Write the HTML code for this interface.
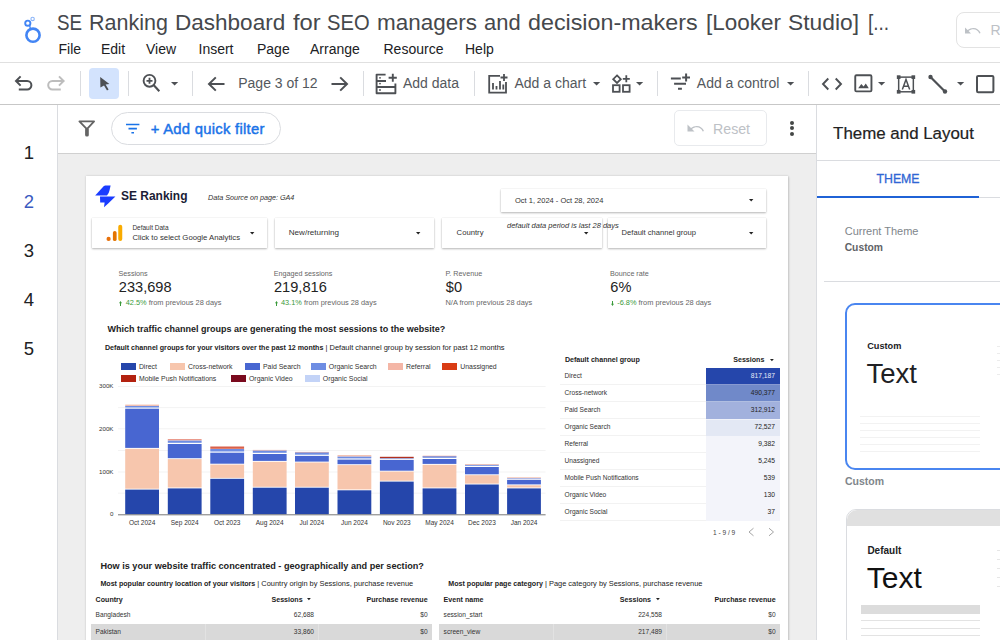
<!DOCTYPE html><html><head><meta charset="utf-8"><style>
html,body{margin:0;padding:0;width:1000px;height:640px;overflow:hidden;background:#fff;font-family:"Liberation Sans",sans-serif;}
.a{position:absolute;}
.t{position:absolute;white-space:nowrap;line-height:1;}
svg{position:absolute;overflow:visible;}
</style></head><body>
<svg style="left:0;top:0" width="60" height="60" viewBox="0 0 60 60">
<circle cx="33" cy="35.2" r="6.6" fill="none" stroke="#4285f4" stroke-width="2.6"/>
<circle cx="27.8" cy="23.2" r="2.6" fill="none" stroke="#4285f4" stroke-width="1.9"/>
<circle cx="32.6" cy="18.9" r="1.7" fill="none" stroke="#8ab4f8" stroke-width="1.1"/>
<line x1="29.6" y1="25.4" x2="30.4" y2="28.6" stroke="#4285f4" stroke-width="1.3"/>
</svg>
<div class="t" style="left:56.80px;top:12.00px;font-size:22.4px;color:#45484c;transform:scaleX(0.84);transform-origin:left center;">SE</div>
<div class="t" style="left:88.50px;top:12.00px;font-size:22.4px;color:#45484c;transform:scaleX(0.96);transform-origin:left center;">Ranking</div>
<div class="t" style="left:174.90px;top:12.00px;font-size:22.4px;color:#45484c;transform:scaleX(1.006);transform-origin:left center;">Dashboard</div>
<div class="t" style="left:292.60px;top:12.00px;font-size:22.4px;color:#45484c;transform:scaleX(1.06);transform-origin:left center;">for</div>
<div class="t" style="left:327.30px;top:12.00px;font-size:22.4px;color:#45484c;transform:scaleX(0.9);transform-origin:left center;">SEO</div>
<div class="t" style="left:376.60px;top:12.00px;font-size:22.4px;color:#45484c;transform:scaleX(1.003);transform-origin:left center;">managers</div>
<div class="t" style="left:483.50px;top:12.00px;font-size:22.4px;color:#45484c;transform:scaleX(0.98);transform-origin:left center;">and</div>
<div class="t" style="left:528.00px;top:12.00px;font-size:22.4px;color:#45484c;transform:scaleX(1.04);transform-origin:left center;">decision-makers</div>
<div class="t" style="left:706.40px;top:12.00px;font-size:22.4px;color:#45484c;transform:scaleX(1.004);transform-origin:left center;">[Looker</div>
<div class="t" style="left:788.00px;top:12.00px;font-size:22.4px;color:#45484c;transform:scaleX(1.018);transform-origin:left center;">Studio]</div>
<div class="t" style="left:868.20px;top:12.00px;font-size:22.4px;color:#45484c;transform:scaleX(0.85);transform-origin:left center;">[...</div>
<div class="t" style="left:58.50px;top:42.00px;font-size:14px;color:#202124;">File</div>
<div class="t" style="left:101.00px;top:42.00px;font-size:14px;color:#202124;">Edit</div>
<div class="t" style="left:146.00px;top:42.00px;font-size:14px;color:#202124;">View</div>
<div class="t" style="left:198.50px;top:42.00px;font-size:14px;color:#202124;">Insert</div>
<div class="t" style="left:257.00px;top:42.00px;font-size:14px;color:#202124;">Page</div>
<div class="t" style="left:310.00px;top:42.00px;font-size:14px;color:#202124;">Arrange</div>
<div class="t" style="left:383.50px;top:42.00px;font-size:14px;color:#202124;">Resource</div>
<div class="t" style="left:465.00px;top:42.00px;font-size:14px;color:#202124;">Help</div>
<div class="a" style="left:955.60px;top:12.00px;width:60.00px;height:36.00px;background:#fff;border:1px solid #e3e3e3;border-radius:8px;box-sizing:border-box;"></div>
<svg style="left:962px;top:22px" width="20" height="16" viewBox="0 0 20 16">
<path d="M3 5.5 V11.5 H9 L6.6 9.1 C8 7.9 9.6 7.3 11.4 7.3 C14.2 7.3 16.4 9 17.3 11.4 L18.6 11 C17.5 7.9 14.7 5.9 11.4 5.9 C9.3 5.9 7.3 6.7 5.6 8.1 Z" fill="#bdc1c6"/>
</svg>
<div class="t" style="left:990.40px;top:23.00px;font-size:14px;color:#bdc1c6;">Re</div>
<div class="a" style="left:0.00px;top:62.00px;width:1000.00px;height:1.00px;background:#e0e0e0;"></div>
<div class="a" style="left:89.00px;top:68.00px;width:30.00px;height:31.00px;background:#d3e3fd;border-radius:4px;"></div>
<div class="a" style="left:79.50px;top:71.00px;width:1.00px;height:24.50px;background:#dadce0;"></div>
<div class="a" style="left:127.50px;top:71.00px;width:1.00px;height:24.50px;background:#dadce0;"></div>
<div class="a" style="left:192.00px;top:71.00px;width:1.00px;height:24.50px;background:#dadce0;"></div>
<div class="a" style="left:362.50px;top:71.00px;width:1.00px;height:24.50px;background:#dadce0;"></div>
<div class="a" style="left:474.00px;top:71.00px;width:1.00px;height:24.50px;background:#dadce0;"></div>
<div class="a" style="left:656.50px;top:71.00px;width:1.00px;height:24.50px;background:#dadce0;"></div>
<div class="a" style="left:807.90px;top:71.00px;width:1.00px;height:24.50px;background:#dadce0;"></div>
<svg style="left:12px;top:72px" width="24" height="24" viewBox="0 0 24 24">
<path d="M4 9 H15.2 A4.2 4.2 0 0 1 15.2 17.4 H6.8" fill="none" stroke="#4d5054" stroke-width="2"/>
<path d="M8.6 4.4 L4 9 L8.6 13.6" fill="none" stroke="#4d5054" stroke-width="2"/>
</svg>
<svg style="left:44px;top:72px" width="24" height="24" viewBox="0 0 24 24">
<path d="M19.4 9 H8.4 A4.2 4.2 0 0 0 8.4 17.4 H16.8" fill="none" stroke="#bdbdbd" stroke-width="2"/>
<path d="M15 4.4 L19.6 9 L15 13.6" fill="none" stroke="#bdbdbd" stroke-width="2"/>
</svg>
<svg style="left:96px;top:72px" width="24" height="24" viewBox="0 0 24 24">
<path d="M4.2 5 L13.4 12 L9.6 12.6 L12.6 17.4 L11 18.4 L8 13.6 L4.4 15.6 Z" fill="#4d5054"/>
</svg>
<svg style="left:140px;top:72px" width="24" height="24" viewBox="0 0 24 24">
<circle cx="9.5" cy="8.8" r="5.9" fill="none" stroke="#4d5054" stroke-width="1.9"/>
<path d="M13.6 13 L19.3 19.2" stroke="#4d5054" stroke-width="2.1"/>
<path d="M9.5 5.8 V11.8 M6.5 8.8 H12.5" stroke="#4d5054" stroke-width="1.8"/>
</svg>
<svg style="left:171px;top:82px" width="7.2" height="3.6" viewBox="0 0 7.2 3.6"><path d="M0 0 H7.2 L3.6 3.6 Z" fill="#4d5054"/></svg>
<svg style="left:204px;top:71.5px" width="24" height="24" viewBox="0 0 24 24">
<path d="M20.5 12 H5.5 M11.8 5.4 L5 12 L11.8 18.6" fill="none" stroke="#4d5054" stroke-width="2"/>
</svg>
<div class="t" style="left:238.25px;top:76.00px;font-size:14px;color:#54585d;">Page 3 of 12</div>
<svg style="left:327.5px;top:71.5px" width="24" height="24" viewBox="0 0 24 24">
<path d="M3.5 12 H18.5 M12.2 5.4 L19 12 L12.2 18.6" fill="none" stroke="#4d5054" stroke-width="2"/>
</svg>
<svg style="left:374px;top:72px" width="24" height="24" viewBox="0 0 24 24">
<path d="M11.6 2.6 H2.6 V21.2 H21.4 V11.5" fill="none" stroke="#4d5054" stroke-width="1.9" stroke-linejoin="round"/>
<path d="M2.6 9 H12 M2.6 15 H21.4" fill="none" stroke="#4d5054" stroke-width="1.9"/>
<path d="M18.8 1.8 V9.8 M14.6 5.8 H22.8" stroke="#4d5054" stroke-width="1.9"/>
<circle cx="6" cy="5.8" r="0.9" fill="#4d5054"/><circle cx="6" cy="11.6" r="0.9" fill="#4d5054"/><circle cx="6" cy="18" r="0.9" fill="#4d5054"/>
</svg>
<div class="t" style="left:403.00px;top:76.00px;font-size:14px;color:#54585d;">Add data</div>
<svg style="left:486px;top:72px" width="24" height="24" viewBox="0 0 24 24">
<path d="M14 3.8 H3.2 V20.6 H20 V10" fill="none" stroke="#4d5054" stroke-width="1.8"/>
<path d="M7 11 V17.5 M10.5 14 V17.5 M14 9 V17.5 M17.3 12.5 V17.5" stroke="#4d5054" stroke-width="1.8"/>
<path d="M18 2 V9 M14.5 5.5 H21.5" stroke="#4d5054" stroke-width="1.8"/>
</svg>
<div class="t" style="left:514.50px;top:76.00px;font-size:14px;color:#54585d;">Add a chart</div>
<svg style="left:592.5px;top:82px" width="7.2" height="3.6" viewBox="0 0 7.2 3.6"><path d="M0 0 H7.2 L3.6 3.6 Z" fill="#4d5054"/></svg>
<svg style="left:610px;top:72px" width="24" height="24" viewBox="0 0 24 24">
<path d="M7 3.4 L10.8 7.2 L7 11 L3.2 7.2 Z" fill="none" stroke="#4d5054" stroke-width="1.8"/>
<rect x="3" y="13.2" width="6.6" height="6.6" fill="none" stroke="#4d5054" stroke-width="1.8"/>
<rect x="13" y="13.2" width="6.6" height="6.6" fill="none" stroke="#4d5054" stroke-width="1.8"/>
<path d="M16.3 3.3 V10.3 M12.8 6.8 H19.8" stroke="#4d5054" stroke-width="1.8"/>
</svg>
<svg style="left:636px;top:82px" width="7.2" height="3.6" viewBox="0 0 7.2 3.6"><path d="M0 0 H7.2 L3.6 3.6 Z" fill="#4d5054"/></svg>
<svg style="left:669px;top:72px" width="24" height="24" viewBox="0 0 24 24">
<path d="M1.9 6.4 H11.8 M5.1 11.7 H17 M9 16.8 H12.9" stroke="#4d5054" stroke-width="2"/>
<path d="M17.1 1.5 V9.4 M13.2 5.6 H21" stroke="#4d5054" stroke-width="2"/>
</svg>
<div class="t" style="left:696.80px;top:76.00px;font-size:14px;color:#54585d;">Add a control</div>
<svg style="left:786.5px;top:82px" width="7.2" height="3.6" viewBox="0 0 7.2 3.6"><path d="M0 0 H7.2 L3.6 3.6 Z" fill="#4d5054"/></svg>
<svg style="left:820px;top:72px" width="24" height="24" viewBox="0 0 24 24">
<path d="M8.3 6.5 L3 12 L8.3 17.5 M15.7 6.5 L21 12 L15.7 17.5" fill="none" stroke="#4d5054" stroke-width="1.9"/>
</svg>
<svg style="left:852px;top:72px" width="24" height="24" viewBox="0 0 24 24">
<rect x="3.25" y="3.25" width="16.2" height="16.1" rx="1.2" fill="none" stroke="#4d5054" stroke-width="1.9"/>
<path d="M6.2 16.2 L9.3 12 L11.6 14.6 L13.8 11.6 L16.8 16.2 Z" fill="#4d5054"/>
</svg>
<svg style="left:877.5px;top:82px" width="7.2" height="3.6" viewBox="0 0 7.2 3.6"><path d="M0 0 H7.2 L3.6 3.6 Z" fill="#4d5054"/></svg>
<svg style="left:895px;top:72.5px" width="22" height="22" viewBox="0 0 24 24">
<rect x="4" y="4.5" width="16" height="16" fill="none" stroke="#4d5054" stroke-width="1.6"/>
<rect x="2" y="2.5" width="4" height="4" fill="#4d5054"/><rect x="18" y="2.5" width="4" height="4" fill="#4d5054"/>
<rect x="2" y="18.5" width="4" height="4" fill="#4d5054"/><rect x="18" y="18.5" width="4" height="4" fill="#4d5054"/>
<path d="M8 18 L12 7 L16 18 M9.3 14.5 H14.7" fill="none" stroke="#4d5054" stroke-width="1.6"/>
</svg>
<svg style="left:926px;top:72px" width="24" height="24" viewBox="0 0 24 24">
<path d="M4.5 5 L19 19.5" stroke="#4d5054" stroke-width="2.2"/>
<circle cx="4.5" cy="5" r="2.2" fill="#4d5054"/><circle cx="19" cy="19.5" r="2.2" fill="#4d5054"/>
</svg>
<svg style="left:957px;top:82px" width="7.2" height="3.6" viewBox="0 0 7.2 3.6"><path d="M0 0 H7.2 L3.6 3.6 Z" fill="#4d5054"/></svg>
<svg style="left:972px;top:72px" width="24" height="24" viewBox="0 0 24 24">
<rect x="5" y="3.9" width="16.4" height="16.4" rx="1.2" fill="none" stroke="#4d5054" stroke-width="2"/>
</svg>
<div class="a" style="left:0.00px;top:104.00px;width:1000.00px;height:1.00px;background:#c7c7c7;"></div>
<div class="a" style="left:57.00px;top:105.00px;width:1.00px;height:535.00px;background:#dadce0;"></div>
<div class="t" style="left:28.80px;top:144.00px;font-size:18.5px;color:#202124;transform:translateX(-50%);transform-origin:left center;">1</div>
<div class="t" style="left:28.80px;top:193.00px;font-size:18.5px;color:#3b5ac0;transform:translateX(-50%);transform-origin:left center;">2</div>
<div class="t" style="left:28.80px;top:242.00px;font-size:18.5px;color:#202124;transform:translateX(-50%);transform-origin:left center;">3</div>
<div class="t" style="left:28.80px;top:291.00px;font-size:18.5px;color:#202124;transform:translateX(-50%);transform-origin:left center;">4</div>
<div class="t" style="left:28.80px;top:340.00px;font-size:18.5px;color:#202124;transform:translateX(-50%);transform-origin:left center;">5</div>
<div class="a" style="left:58.00px;top:153.00px;width:759.00px;height:1.00px;background:#d0d0d0;"></div>
<div class="a" style="left:58.00px;top:154.00px;width:758.00px;height:486.00px;background:#eeeeee;"></div>
<svg style="left:76px;top:117px" width="22" height="22" viewBox="0 0 22 22">
<path d="M3.4 4.35 H18.1 L10.9 12.2 Z" fill="none" stroke="#646464" stroke-width="1.8" stroke-linejoin="round"/>
<rect x="9.1" y="11" width="3.7" height="8.5" rx="1.6" fill="#646464"/>
</svg>
<div class="a" style="left:111.00px;top:112.20px;width:170.00px;height:32.40px;background:transparent;border:1px solid #dadce0;border-radius:17px;box-sizing:border-box;"></div>
<svg style="left:124px;top:120px" width="18" height="16" viewBox="0 0 18 16">
<path d="M2 4.5 H15.4 M4.5 8.6 H12.9 M7.4 12.7 H10" stroke="#1a73e8" stroke-width="1.6"/>
</svg>
<div class="t" style="left:150.70px;top:122.00px;font-size:14.8px;color:#1a73e8;letter-spacing:0.28px;-webkit-text-stroke:0.45px #1a73e8;">+ Add quick filter</div>
<div class="a" style="left:674.40px;top:110.40px;width:92.20px;height:36.00px;background:transparent;border:1px solid #e8eaed;border-radius:5px;box-sizing:border-box;"></div>
<svg style="left:685px;top:120px" width="20" height="16" viewBox="0 0 20 16">
<path d="M2.5 4.5 V11.5 H9.5 L7 9 C8.4 7.9 10 7.3 11.8 7.3 C14.5 7.3 16.8 9 17.7 11.4 L19 11 C17.9 7.9 15.1 5.9 11.8 5.9 C9.6 5.9 7.6 6.7 6 8 Z" fill="#bdc1c6"/>
</svg>
<div class="t" style="left:713.00px;top:122.00px;font-size:14.2px;color:#bdc1c6;">Reset</div>
<div class="a" style="left:789.75px;top:120.50px;width:4px;height:4px;border-radius:2px;background:#444746"></div>
<div class="a" style="left:789.75px;top:126.40px;width:4px;height:4px;border-radius:2px;background:#444746"></div>
<div class="a" style="left:789.75px;top:132.30px;width:4px;height:4px;border-radius:2px;background:#444746"></div>
<div class="a" style="left:816.00px;top:105.00px;width:1.00px;height:535.00px;background:#dadce0;"></div>
<div class="t" style="left:833.10px;top:126.00px;font-size:16.9px;color:#222;-webkit-text-stroke:0.2px #222;">Theme and Layout</div>
<div class="a" style="left:817.00px;top:160.00px;width:183.00px;height:1.00px;background:#dadce0;"></div>
<div class="t" style="left:876.50px;top:173.00px;font-size:12.3px;color:#2f66d4;-webkit-text-stroke:0.3px #2f66d4;">THEME</div>
<div class="a" style="left:817.00px;top:196.00px;width:162.00px;height:2.20px;background:#1f62d6;"></div>
<div class="a" style="left:979.00px;top:197.00px;width:21.00px;height:1.00px;background:#dadce0;"></div>
<div class="t" style="left:844.70px;top:226.00px;font-size:11px;color:#80868b;">Current Theme</div>
<div class="t" style="left:844.70px;top:243.00px;font-size:10.3px;color:#5f6368;font-weight:bold;">Custom</div>
<div class="a" style="left:824.00px;top:281.00px;width:176.00px;height:1.00px;background:#dadce0;"></div>
<div class="a" style="left:844.90px;top:303.10px;width:200.00px;height:166.60px;background:#fff;border:2px solid #4a86f0;border-radius:10px;box-sizing:border-box;"></div>
<div class="t" style="left:867.20px;top:342.00px;font-size:9.2px;color:#202124;font-weight:bold;">Custom</div>
<div class="t" style="left:866.50px;top:360.00px;font-size:27.5px;color:#202124;">Text</div>
<div class="a" style="left:860.30px;top:415.60px;width:120.00px;height:0.80px;background:#f2f2f2;"></div>
<div class="a" style="left:860.30px;top:422.80px;width:120.00px;height:0.80px;background:#f2f2f2;"></div>
<div class="a" style="left:860.30px;top:429.70px;width:120.00px;height:0.80px;background:#f2f2f2;"></div>
<div class="a" style="left:860.30px;top:436.50px;width:120.00px;height:0.80px;background:#f2f2f2;"></div>
<div class="a" style="left:860.30px;top:444.00px;width:120.00px;height:0.80px;background:#f2f2f2;"></div>
<div class="a" style="left:860.30px;top:451.30px;width:120.00px;height:0.80px;background:#f2f2f2;"></div>
<div class="a" style="left:996.50px;top:346.00px;width:4.00px;height:1.00px;background:#ececec;"></div>
<div class="a" style="left:996.50px;top:353.00px;width:4.00px;height:1.00px;background:#ececec;"></div>
<div class="a" style="left:996.50px;top:360.00px;width:4.00px;height:1.00px;background:#ececec;"></div>
<div class="a" style="left:996.50px;top:367.00px;width:4.00px;height:1.00px;background:#ececec;"></div>
<div class="a" style="left:996.50px;top:374.00px;width:4.00px;height:1.00px;background:#ececec;"></div>
<div class="t" style="left:844.90px;top:476.00px;font-size:10.5px;color:#80868b;font-weight:bold;">Custom</div>
<div class="a" style="left:846.10px;top:509.20px;width:200.00px;height:140.00px;background:#fff;border:1px solid #dadce0;border-radius:10px;box-sizing:border-box;overflow:hidden;"></div>
<div class="a" style="left:846.60px;top:509.70px;width:160.00px;height:16.10px;background:#e0e0e0;border-radius:10px 0 0 0;"></div>
<div class="t" style="left:867.40px;top:546.00px;font-size:10px;color:#202124;font-weight:bold;">Default</div>
<div class="t" style="left:866.80px;top:563.00px;font-size:30px;color:#111;">Text</div>
<div class="a" style="left:861.20px;top:605.00px;width:119.00px;height:8.80px;background:#dcdcdc;"></div>
<div class="a" style="left:861.20px;top:620.40px;width:119.00px;height:1.00px;background:#e3e3e3;"></div>
<div class="a" style="left:861.20px;top:628.00px;width:119.00px;height:1.00px;background:#e3e3e3;"></div>
<div class="a" style="left:861.20px;top:635.20px;width:119.00px;height:1.00px;background:#e3e3e3;"></div>
<div class="a" style="left:997.00px;top:550.00px;width:3.00px;height:1.00px;background:#e6e6e6;"></div>
<div class="a" style="left:997.00px;top:559.00px;width:3.00px;height:1.00px;background:#e6e6e6;"></div>
<div class="a" style="left:997.00px;top:568.00px;width:3.00px;height:1.00px;background:#e6e6e6;"></div>
<div class="a" style="left:997.00px;top:577.00px;width:3.00px;height:1.00px;background:#e6e6e6;"></div>
<div class="a" style="left:997.00px;top:586.00px;width:3.00px;height:1.00px;background:#e6e6e6;"></div>
<div class="a" style="left:86.00px;top:175.70px;width:702.20px;height:470.00px;background:#fff;box-shadow:0 0 2px rgba(0,0,0,0.18), 1px 1px 2px rgba(0,0,0,0.12);"></div>
<svg style="left:86px;top:176px" width="40" height="40" viewBox="0 0 40 40">
<path d="M9.2 19.4 L17.4 10.4 C18.2 9.6 18.9 9.4 20 9.4 H24.6 L23.6 14 C23.2 15.8 22.6 17.6 21 19.4 Z" fill="#1a3cff"/>
<path d="M14 20.6 H29.4 L22.2 27.4 L18 31.2 L18.6 26.6 H14.2 Z" fill="#1a3cff"/>
</svg>
<div class="t" style="left:121.00px;top:189.00px;font-size:13.6px;color:#1b1d36;font-weight:bold;transform:scaleX(0.88);transform-origin:left center;">SE Ranking</div>
<div class="t" style="left:208.00px;top:194.00px;font-size:7.2px;color:#333;font-style:italic;">Data Source on page: GA4</div>
<div class="a" style="left:501.00px;top:189.40px;width:265.00px;height:22.40px;background:#fff;box-shadow:0 1px 2px rgba(0,0,0,0.28), 0 0 1px rgba(0,0,0,0.12);"></div>
<div class="t" style="left:515.00px;top:197.00px;font-size:7.5px;color:#333;">Oct 1, 2024 - Oct 28, 2024</div>
<svg style="left:749px;top:199.3px" width="4.4" height="2.4" viewBox="0 0 4.4 2.4"><path d="M0 0 H4.4 L2.2 2.4 Z" fill="#222"/></svg>
<div class="a" style="left:91.60px;top:218.20px;width:175.40px;height:29.40px;background:#fff;box-shadow:0 1px 2px rgba(0,0,0,0.28), 0 0 1px rgba(0,0,0,0.12);"></div>
<div class="a" style="left:275.00px;top:218.20px;width:159.00px;height:29.40px;background:#fff;box-shadow:0 1px 2px rgba(0,0,0,0.28), 0 0 1px rgba(0,0,0,0.12);"></div>
<div class="a" style="left:442.40px;top:218.20px;width:159.20px;height:29.40px;background:#fff;box-shadow:0 1px 2px rgba(0,0,0,0.28), 0 0 1px rgba(0,0,0,0.12);"></div>
<div class="a" style="left:607.60px;top:218.20px;width:158.40px;height:29.40px;background:#fff;box-shadow:0 1px 2px rgba(0,0,0,0.28), 0 0 1px rgba(0,0,0,0.12);"></div>
<div class="t" style="left:507.00px;top:222.00px;font-size:7.5px;color:#333;font-style:italic;">default data period is last 28 days</div>
<svg style="left:104px;top:222px" width="20" height="22" viewBox="0 0 20 22">
<circle cx="4.6" cy="16.9" r="2.1" fill="#e8710a"/>
<rect x="8.9" y="9" width="3.7" height="10" rx="1.85" fill="#e37400"/>
<rect x="14.25" y="2.75" width="4" height="16.25" rx="2" fill="#f9ab00"/>
</svg>
<div class="t" style="left:132.40px;top:225.00px;font-size:6.5px;color:#333;">Default Data</div>
<div class="a" style="left:132px;top:230px;width:109px;height:12px;overflow:hidden">
<div class="t" style="left:0.40px;top:4.00px;font-size:7.75px;color:#333;">Click to select Google Analytics data</div>
</div>
<svg style="left:249.5px;top:232px" width="4.4" height="2.4" viewBox="0 0 4.4 2.4"><path d="M0 0 H4.4 L2.2 2.4 Z" fill="#222"/></svg>
<div class="t" style="left:288.70px;top:229.00px;font-size:8.1px;color:#333;">New/returning</div>
<svg style="left:416px;top:232px" width="4.4" height="2.4" viewBox="0 0 4.4 2.4"><path d="M0 0 H4.4 L2.2 2.4 Z" fill="#222"/></svg>
<div class="t" style="left:456.60px;top:229.00px;font-size:7.7px;color:#333;">Country</div>
<svg style="left:583.5px;top:232px" width="4.4" height="2.4" viewBox="0 0 4.4 2.4"><path d="M0 0 H4.4 L2.2 2.4 Z" fill="#222"/></svg>
<div class="t" style="left:621.60px;top:229.00px;font-size:7.6px;color:#333;">Default channel group</div>
<svg style="left:749px;top:232px" width="4.4" height="2.4" viewBox="0 0 4.4 2.4"><path d="M0 0 H4.4 L2.2 2.4 Z" fill="#222"/></svg>
<div class="t" style="left:118.50px;top:270.00px;font-size:7.2px;color:#666;">Sessions</div>
<div class="t" style="left:118.80px;top:280.00px;font-size:14.6px;color:#222;">233,698</div>
<svg style="left:119.3px;top:301.2px" width="3" height="5" viewBox="0 0 3 5"><path d="M1.5 0 L3 2.2 H2 V5 H1 V2.2 H0 Z" fill="#3a9a3a"/></svg>
<div class="t" style="left:125.70px;top:299.00px;font-size:7.4px;color:#666;"><span style="color:#3a9a3a">42.5%</span> from previous 28 days</div>
<div class="t" style="left:273.70px;top:270.00px;font-size:7.2px;color:#666;">Engaged sessions</div>
<div class="t" style="left:274.00px;top:280.00px;font-size:14.6px;color:#222;">219,816</div>
<svg style="left:274.5px;top:301.2px" width="3" height="5" viewBox="0 0 3 5"><path d="M1.5 0 L3 2.2 H2 V5 H1 V2.2 H0 Z" fill="#3a9a3a"/></svg>
<div class="t" style="left:280.90px;top:299.00px;font-size:7.4px;color:#666;"><span style="color:#3a9a3a">43.1%</span> from previous 28 days</div>
<div class="t" style="left:445.50px;top:270.00px;font-size:7.2px;color:#666;">P. Revenue</div>
<div class="t" style="left:445.80px;top:280.00px;font-size:14.6px;color:#222;">$0</div>
<div class="t" style="left:445.50px;top:299.00px;font-size:7.4px;color:#666;">N/A <span style="color:#666">from previous 28 days</span></div>
<div class="t" style="left:610.00px;top:270.00px;font-size:7.2px;color:#666;">Bounce rate</div>
<div class="t" style="left:610.30px;top:280.00px;font-size:14.6px;color:#222;">6%</div>
<svg style="left:610.8px;top:301.2px" width="3" height="5" viewBox="0 0 3 5"><path d="M1.5 5 L3 2.8 H2 V0 H1 V2.8 H0 Z" fill="#3a9a3a"/></svg>
<div class="t" style="left:617.20px;top:299.00px;font-size:7.4px;color:#666;"><span style="color:#3a9a3a">-6.8%</span> from previous 28 days</div>
<div class="t" style="left:107.60px;top:325.00px;font-size:9.0px;color:#222;font-weight:bold;">Which traffic channel groups are generating the most sessions to the website?</div>
<div class="t" style="left:105.00px;top:344.00px;font-size:7.1px;color:#222;"><b>Default channel groups for your visitors over the past 12 months</b><span style="font-size:7.5px"> | Default channel group by session for past 12 months</span></div>
<div class="a" style="left:120.90px;top:362.90px;width:15.20px;height:7.00px;background:#2546ab;"></div>
<div class="t" style="left:138.90px;top:364.00px;font-size:6.9px;color:#333;">Direct</div>
<div class="a" style="left:170.10px;top:362.90px;width:15.20px;height:7.00px;background:#f7c6ad;"></div>
<div class="t" style="left:188.10px;top:364.00px;font-size:6.9px;color:#333;">Cross-network</div>
<div class="a" style="left:245.00px;top:362.90px;width:15.20px;height:7.00px;background:#4866d1;"></div>
<div class="t" style="left:263.00px;top:364.00px;font-size:6.9px;color:#333;">Paid Search</div>
<div class="a" style="left:310.80px;top:362.90px;width:15.20px;height:7.00px;background:#6e8de3;"></div>
<div class="t" style="left:328.80px;top:364.00px;font-size:6.9px;color:#333;">Organic Search</div>
<div class="a" style="left:388.00px;top:362.90px;width:15.20px;height:7.00px;background:#f4b6a6;"></div>
<div class="t" style="left:406.00px;top:364.00px;font-size:6.9px;color:#333;">Referral</div>
<div class="a" style="left:442.30px;top:362.90px;width:15.20px;height:7.00px;background:#d93c14;"></div>
<div class="t" style="left:460.30px;top:364.00px;font-size:6.9px;color:#333;">Unassigned</div>
<div class="a" style="left:120.90px;top:374.90px;width:15.20px;height:7.00px;background:#b32210;"></div>
<div class="t" style="left:138.90px;top:376.00px;font-size:6.9px;color:#333;">Mobile Push Notifications</div>
<div class="a" style="left:231.00px;top:374.90px;width:15.20px;height:7.00px;background:#7a0a1e;"></div>
<div class="t" style="left:249.00px;top:376.00px;font-size:6.9px;color:#333;">Organic Video</div>
<div class="a" style="left:304.80px;top:374.90px;width:15.20px;height:7.00px;background:#c3d3f7;"></div>
<div class="t" style="left:322.80px;top:376.00px;font-size:6.9px;color:#333;">Organic Social</div>
<svg style="left:0;top:0" width="1000" height="640" viewBox="0 0 1000 640"><rect x="118" y="386" width="427.6" height="0.8" fill="#f0f0f0"/><rect x="118" y="407.3" width="427.6" height="0.8" fill="#f0f0f0"/><rect x="118" y="428.4" width="427.6" height="0.8" fill="#f0f0f0"/><rect x="118" y="450" width="427.6" height="0.8" fill="#f0f0f0"/><rect x="118" y="471.6" width="427.6" height="0.8" fill="#f0f0f0"/><rect x="118" y="492.7" width="427.6" height="0.8" fill="#f0f0f0"/><rect x="125.2" y="489.6" width="33.8" height="24.699999999999932" fill="#2546ab"/><rect x="125.2" y="448.8" width="33.8" height="39.90000000000001" fill="#f7c6ad"/><rect x="125.2" y="408.7" width="33.8" height="39.200000000000024" fill="#4866d1"/><rect x="125.2" y="405.9" width="33.8" height="1.6000000000000114" fill="#6e8de3"/><rect x="125.2" y="404.7" width="33.8" height="0.9999999999999887" fill="#f0a890"/><rect x="167.8" y="488.4" width="33.8" height="25.899999999999977" fill="#2546ab"/><rect x="167.8" y="459.1" width="33.8" height="28.399999999999956" fill="#f7c6ad"/><rect x="167.8" y="444.0" width="33.8" height="14.200000000000022" fill="#4866d1"/><rect x="167.8" y="440.5" width="33.8" height="2.3" fill="#6e8de3"/><rect x="167.8" y="439.1" width="33.8" height="1.1999999999999773" fill="#e89080"/><rect x="210.3" y="478.8" width="33.8" height="35.49999999999994" fill="#2546ab"/><rect x="210.3" y="464.6" width="33.8" height="13.299999999999988" fill="#f7c6ad"/><rect x="210.3" y="452.7" width="33.8" height="11.000000000000034" fill="#4866d1"/><rect x="210.3" y="449.0" width="33.8" height="2.4999999999999885" fill="#6e8de3"/><rect x="210.3" y="446.5" width="33.8" height="2.3" fill="#d9604a"/><rect x="252.8" y="487.7" width="33.8" height="26.599999999999966" fill="#2546ab"/><rect x="252.8" y="461.8" width="33.8" height="24.99999999999998" fill="#f7c6ad"/><rect x="252.8" y="454.0" width="33.8" height="6.900000000000011" fill="#4866d1"/><rect x="252.8" y="450.4" width="33.8" height="2.4000000000000226" fill="#6e8de3"/><rect x="252.8" y="449.9" width="33.8" height="0.6" fill="#f0b0a0"/><rect x="295.0" y="487.7" width="33.8" height="26.599999999999966" fill="#2546ab"/><rect x="295.0" y="462.5" width="33.8" height="24.29999999999999" fill="#f7c6ad"/><rect x="295.0" y="455.9" width="33.8" height="5.700000000000022" fill="#4866d1"/><rect x="295.0" y="452.1" width="33.8" height="2.5999999999999543" fill="#6e8de3"/><rect x="295.0" y="451.9" width="33.8" height="0.6" fill="#f0b0a0"/><rect x="337.5" y="490.3" width="33.8" height="23.999999999999943" fill="#2546ab"/><rect x="337.5" y="465.1" width="33.8" height="24.29999999999999" fill="#f7c6ad"/><rect x="337.5" y="459.6" width="33.8" height="4.6" fill="#4866d1"/><rect x="337.5" y="456.5" width="33.8" height="1.9000000000000228" fill="#6e8de3"/><rect x="337.5" y="455.3" width="33.8" height="0.9999999999999887" fill="#f0a890"/><rect x="379.9" y="481.6" width="33.8" height="32.69999999999993" fill="#2546ab"/><rect x="379.9" y="471.6" width="33.8" height="9.1" fill="#f7c6ad"/><rect x="379.9" y="459.9" width="33.8" height="10.800000000000045" fill="#4866d1"/><rect x="379.9" y="458.3" width="33.8" height="0.6" fill="#6e8de3"/><rect x="379.9" y="456.8" width="33.8" height="1.3" fill="#b03020"/><rect x="422.6" y="488.4" width="33.8" height="25.899999999999977" fill="#2546ab"/><rect x="422.6" y="464.8" width="33.8" height="22.699999999999967" fill="#f7c6ad"/><rect x="422.6" y="459.0" width="33.8" height="4.900000000000011" fill="#4866d1"/><rect x="422.6" y="456.0" width="33.8" height="1.8" fill="#6e8de3"/><rect x="422.6" y="455.7" width="33.8" height="0.6" fill="#f0b0a0"/><rect x="465.0" y="484.5" width="33.8" height="29.799999999999955" fill="#2546ab"/><rect x="465.0" y="475.2" width="33.8" height="8.400000000000011" fill="#f7c6ad"/><rect x="465.0" y="467.0" width="33.8" height="7.299999999999988" fill="#4866d1"/><rect x="465.0" y="464.8" width="33.8" height="0.9999999999999887" fill="#6e8de3"/><rect x="465.0" y="464.0" width="33.8" height="0.6000000000000114" fill="#f0a890"/><rect x="507.1" y="488.4" width="33.8" height="25.899999999999977" fill="#2546ab"/><rect x="507.1" y="485.3" width="33.8" height="2.199999999999966" fill="#f7c6ad"/><rect x="507.1" y="479.8" width="33.8" height="4.6" fill="#4866d1"/><rect x="507.1" y="478.2" width="33.8" height="0.6" fill="#6e8de3"/><rect x="507.1" y="477.5" width="33.8" height="0.6" fill="#f0a890"/><rect x="118" y="514.3" width="427.6" height="1" fill="#777"/></svg>
<div class="t" style="right:886.50px;top:383.00px;font-size:6.2px;color:#333;">300K</div>
<div class="t" style="right:886.50px;top:426.00px;font-size:6.2px;color:#333;">200K</div>
<div class="t" style="right:886.50px;top:469.00px;font-size:6.2px;color:#333;">100K</div>
<div class="t" style="right:886.50px;top:511.00px;font-size:6.2px;color:#333;">0</div>
<div class="t" style="left:142.10px;top:520.00px;font-size:6.5px;color:#333;transform:translateX(-50%);transform-origin:left center;">Oct 2024</div>
<div class="t" style="left:184.70px;top:520.00px;font-size:6.5px;color:#333;transform:translateX(-50%);transform-origin:left center;">Sep 2024</div>
<div class="t" style="left:227.20px;top:520.00px;font-size:6.5px;color:#333;transform:translateX(-50%);transform-origin:left center;">Oct 2023</div>
<div class="t" style="left:269.70px;top:520.00px;font-size:6.5px;color:#333;transform:translateX(-50%);transform-origin:left center;">Aug 2024</div>
<div class="t" style="left:311.90px;top:520.00px;font-size:6.5px;color:#333;transform:translateX(-50%);transform-origin:left center;">Jul 2024</div>
<div class="t" style="left:354.40px;top:520.00px;font-size:6.5px;color:#333;transform:translateX(-50%);transform-origin:left center;">Jun 2024</div>
<div class="t" style="left:396.80px;top:520.00px;font-size:6.5px;color:#333;transform:translateX(-50%);transform-origin:left center;">Nov 2023</div>
<div class="t" style="left:439.50px;top:520.00px;font-size:6.5px;color:#333;transform:translateX(-50%);transform-origin:left center;">May 2024</div>
<div class="t" style="left:481.90px;top:520.00px;font-size:6.5px;color:#333;transform:translateX(-50%);transform-origin:left center;">Dec 2023</div>
<div class="t" style="left:524.00px;top:520.00px;font-size:6.5px;color:#333;transform:translateX(-50%);transform-origin:left center;">Jan 2024</div>
<div class="t" style="left:564.90px;top:357.00px;font-size:7.1px;color:#222;font-weight:bold;">Default channel group</div>
<div class="t" style="right:235.60px;top:357.00px;font-size:7.1px;color:#222;font-weight:bold;">Sessions</div>
<svg style="left:769.5px;top:358.8px" width="3.8" height="2.2" viewBox="0 0 3.8 2.2"><path d="M0 0 H3.8 L1.9 2.2 Z" fill="#222"/></svg>
<div class="a" style="left:705.50px;top:367.90px;width:74.80px;height:16.70px;background:#2546ab;"></div>
<div class="a" style="left:560.00px;top:383.90px;width:145.50px;height:0.80px;background:#f2f2f2;"></div>
<div class="t" style="left:564.60px;top:373.00px;font-size:6.6px;color:#333;">Direct</div>
<div class="t" style="right:225.00px;top:373.00px;font-size:6.7px;color:#e8ecf8;">817,187</div>
<div class="a" style="left:705.50px;top:384.60px;width:74.80px;height:17.00px;background:#7089c9;"></div>
<div class="a" style="left:705.50px;top:384.20px;width:74.80px;height:0.80px;background:rgba(255,255,255,0.45);"></div>
<div class="a" style="left:560.00px;top:400.90px;width:145.50px;height:0.80px;background:#f2f2f2;"></div>
<div class="t" style="left:564.60px;top:390.00px;font-size:6.6px;color:#333;">Cross-network</div>
<div class="t" style="right:225.00px;top:390.00px;font-size:6.7px;color:#222;">490,377</div>
<div class="a" style="left:705.50px;top:401.60px;width:74.80px;height:17.30px;background:#a2b1dd;"></div>
<div class="a" style="left:705.50px;top:401.20px;width:74.80px;height:0.80px;background:rgba(255,255,255,0.45);"></div>
<div class="a" style="left:560.00px;top:418.20px;width:145.50px;height:0.80px;background:#f2f2f2;"></div>
<div class="t" style="left:564.60px;top:407.00px;font-size:6.6px;color:#333;">Paid Search</div>
<div class="t" style="right:225.00px;top:407.00px;font-size:6.7px;color:#222;">312,912</div>
<div class="a" style="left:705.50px;top:418.90px;width:74.80px;height:16.80px;background:#e3e8f4;"></div>
<div class="a" style="left:705.50px;top:418.50px;width:74.80px;height:0.80px;background:rgba(255,255,255,0.45);"></div>
<div class="a" style="left:560.00px;top:435.00px;width:145.50px;height:0.80px;background:#f2f2f2;"></div>
<div class="t" style="left:564.60px;top:424.00px;font-size:6.6px;color:#333;">Organic Search</div>
<div class="t" style="right:225.00px;top:424.00px;font-size:6.7px;color:#222;">72,527</div>
<div class="a" style="left:705.50px;top:435.70px;width:74.80px;height:17.20px;background:#f3f4fa;"></div>
<div class="a" style="left:560.00px;top:452.20px;width:145.50px;height:0.80px;background:#f2f2f2;"></div>
<div class="t" style="left:564.60px;top:441.00px;font-size:6.6px;color:#333;">Referral</div>
<div class="t" style="right:225.00px;top:441.00px;font-size:6.7px;color:#222;">9,382</div>
<div class="a" style="left:705.50px;top:452.90px;width:74.80px;height:17.10px;background:#f3f4fa;"></div>
<div class="a" style="left:560.00px;top:469.30px;width:145.50px;height:0.80px;background:#f2f2f2;"></div>
<div class="t" style="left:564.60px;top:458.00px;font-size:6.6px;color:#333;">Unassigned</div>
<div class="t" style="right:225.00px;top:458.00px;font-size:6.7px;color:#222;">5,245</div>
<div class="a" style="left:705.50px;top:470.00px;width:74.80px;height:16.80px;background:#f3f4fa;"></div>
<div class="a" style="left:560.00px;top:486.10px;width:145.50px;height:0.80px;background:#f2f2f2;"></div>
<div class="t" style="left:564.60px;top:475.00px;font-size:6.6px;color:#333;">Mobile Push Notifications</div>
<div class="t" style="right:225.00px;top:475.00px;font-size:6.7px;color:#222;">539</div>
<div class="a" style="left:705.50px;top:486.80px;width:74.80px;height:17.30px;background:#f3f4fa;"></div>
<div class="a" style="left:560.00px;top:503.40px;width:145.50px;height:0.80px;background:#f2f2f2;"></div>
<div class="t" style="left:564.60px;top:492.00px;font-size:6.6px;color:#333;">Organic Video</div>
<div class="t" style="right:225.00px;top:492.00px;font-size:6.7px;color:#222;">130</div>
<div class="a" style="left:705.50px;top:504.10px;width:74.80px;height:16.50px;background:#f3f4fa;"></div>
<div class="a" style="left:560.00px;top:519.90px;width:145.50px;height:0.80px;background:#f2f2f2;"></div>
<div class="t" style="left:564.60px;top:509.00px;font-size:6.6px;color:#333;">Organic Social</div>
<div class="t" style="right:225.00px;top:509.00px;font-size:6.7px;color:#222;">37</div>
<div class="t" style="left:712.90px;top:530.00px;font-size:6.6px;color:#444;">1 - 9 / 9</div>
<svg style="left:746px;top:527px" width="30" height="10" viewBox="0 0 30 10"><path d="M7.5 1.2 L3 5 L7.5 8.8 M23 1.2 L27.5 5 L23 8.8" fill="none" stroke="#9a9a9a" stroke-width="0.9"/></svg>
<div class="t" style="left:100.40px;top:562.00px;font-size:9.14px;color:#222;font-weight:bold;">How is your website traffic concentrated - geographically and per section?</div>
<div class="t" style="left:100.40px;top:580.00px;font-size:7.1px;color:#222;"><b>Most popular country location of your visitors</b><span style="font-size:7.43px"> | Country origin by Sessions, purchase revenue</span></div>
<div class="t" style="left:448.30px;top:580.00px;font-size:7.1px;color:#222;"><b>Most popular page category</b><span style="font-size:7.43px"> | Page category by Sessions, purchase revenue</span></div>
<div class="t" style="left:95.60px;top:597.00px;font-size:7.1px;color:#222;font-weight:bold;">Country</div>
<div class="t" style="right:697.40px;top:597.00px;font-size:7.1px;color:#222;font-weight:bold;">Sessions</div>
<svg style="left:307.4px;top:598px" width="3.8" height="2.2" viewBox="0 0 3.8 2.2"><path d="M0 0 H3.8 L1.9 2.2 Z" fill="#222"/></svg>
<div class="t" style="right:572.40px;top:597.00px;font-size:7.1px;color:#222;font-weight:bold;">Purchase revenue</div>
<div class="t" style="left:95.60px;top:612.00px;font-size:6.6px;color:#333;">Bangladesh</div>
<div class="t" style="right:686.00px;top:612.00px;font-size:6.6px;color:#333;">62,688</div>
<div class="t" style="right:572.40px;top:612.00px;font-size:6.6px;color:#333;">$0</div>
<div class="a" style="left:91.00px;top:623.60px;width:341.40px;height:20.00px;background:#d9d9d9;"></div>
<div class="a" style="left:318.00px;top:623.60px;width:0.80px;height:20.00px;background:#e2e2e2;"></div>
<div class="a" style="left:204.80px;top:623.60px;width:0.80px;height:20.00px;background:#e2e2e2;"></div>
<div class="t" style="left:95.60px;top:629.00px;font-size:6.6px;color:#333;">Pakistan</div>
<div class="t" style="right:686.00px;top:629.00px;font-size:6.6px;color:#333;">33,860</div>
<div class="t" style="right:572.40px;top:629.00px;font-size:6.6px;color:#333;">$0</div>
<div class="t" style="left:443.60px;top:597.00px;font-size:7.1px;color:#222;font-weight:bold;">Event name</div>
<div class="t" style="right:349.00px;top:597.00px;font-size:7.1px;color:#222;font-weight:bold;">Sessions</div>
<svg style="left:655.8px;top:598px" width="3.8" height="2.2" viewBox="0 0 3.8 2.2"><path d="M0 0 H3.8 L1.9 2.2 Z" fill="#222"/></svg>
<div class="t" style="right:224.40px;top:597.00px;font-size:7.1px;color:#222;font-weight:bold;">Purchase revenue</div>
<div class="t" style="left:443.60px;top:612.00px;font-size:6.6px;color:#333;">session_start</div>
<div class="t" style="right:338.00px;top:612.00px;font-size:6.6px;color:#333;">224,558</div>
<div class="t" style="right:224.40px;top:612.00px;font-size:6.6px;color:#333;">$0</div>
<div class="a" style="left:439.00px;top:623.60px;width:341.40px;height:20.00px;background:#d9d9d9;"></div>
<div class="a" style="left:666.00px;top:623.60px;width:0.80px;height:20.00px;background:#e2e2e2;"></div>
<div class="a" style="left:552.80px;top:623.60px;width:0.80px;height:20.00px;background:#e2e2e2;"></div>
<div class="t" style="left:443.60px;top:629.00px;font-size:6.6px;color:#333;">screen_view</div>
<div class="t" style="right:338.00px;top:629.00px;font-size:6.6px;color:#333;">217,489</div>
<div class="t" style="right:224.40px;top:629.00px;font-size:6.6px;color:#333;">$0</div>
</body></html>
